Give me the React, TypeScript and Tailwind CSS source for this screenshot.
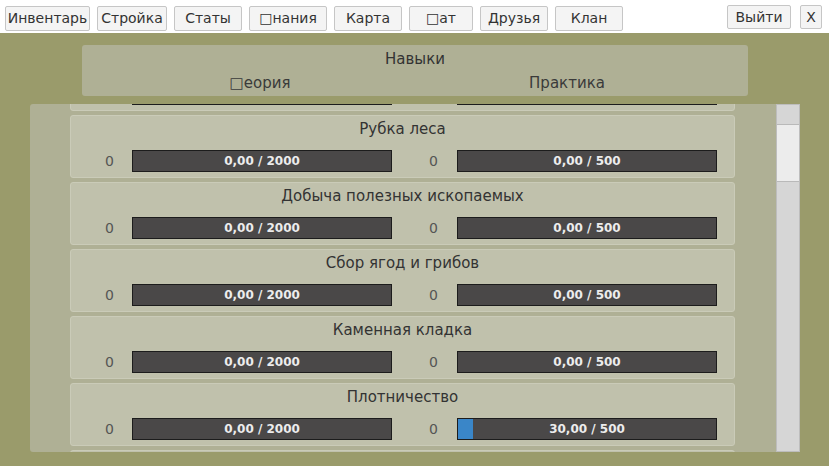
import React from "react";

type Skill = {
  name: string;
  theoryLvl: number;
  theory: number;
  theoryMax: number;
  practiceLvl: number;
  practice: number;
  practiceMax: number;
  partial?: boolean;
};

const skills: Skill[] = [
  { name: "", theoryLvl: 0, theory: 0, theoryMax: 2000, practiceLvl: 0, practice: 0, practiceMax: 500, partial: true },
  { name: "Рубка леса", theoryLvl: 0, theory: 0, theoryMax: 2000, practiceLvl: 0, practice: 0, practiceMax: 500 },
  { name: "Добыча полезных ископаемых", theoryLvl: 0, theory: 0, theoryMax: 2000, practiceLvl: 0, practice: 0, practiceMax: 500 },
  { name: "Сбор ягод и грибов", theoryLvl: 0, theory: 0, theoryMax: 2000, practiceLvl: 0, practice: 0, practiceMax: 500 },
  { name: "Каменная кладка", theoryLvl: 0, theory: 0, theoryMax: 2000, practiceLvl: 0, practice: 0, practiceMax: 500 },
  { name: "Плотничество", theoryLvl: 0, theory: 0, theoryMax: 2000, practiceLvl: 0, practice: 30, practiceMax: 500 },
  { name: "", theoryLvl: 0, theory: 0, theoryMax: 2000, practiceLvl: 0, practice: 0, practiceMax: 500, partial: true },
];

const navButtons = [
  { label: "Инвентарь", w: "w-[85px]" },
  { label: "Стройка", w: "w-[70px]" },
  { label: "Статы", w: "w-[68px]" },
  { label: "□нания", w: "w-[78px]" },
  { label: "Карта", w: "w-[68px]" },
  { label: "□ат", w: "w-[64px]" },
  { label: "Друзья", w: "w-[68px]" },
  { label: "Клан", w: "w-[68px]" },
];

function fmt(n: number) {
  return n.toFixed(2).replace(".", ",");
}

function Bar({ value, max, hideText }: { value: number; max: number; hideText?: boolean }) {
  const pct = Math.min(100, (value / max) * 100);
  return (
    <div className="relative w-[260px] h-[22px] bg-[#4a4848] border border-[#1c1c1c] overflow-hidden">
      <div className="absolute left-0 top-0 bottom-0 bg-[#3a86c8]" style={{ width: `${pct}%` }} />
      <div className="relative h-full flex items-center justify-center text-[12px] font-bold text-[#ececec]">
        {hideText ? "" : `${fmt(value)} / ${max}`}
      </div>
    </div>
  );
}

function SkillRow({ skill }: { skill: Skill }) {
  return (
    <div className="w-[665px] h-[63px] shrink-0 mb-[4px] rounded-[3px] bg-[#c0c1ac] border border-[#cacbb8] flex flex-col">
      <div className="h-[24px] pt-[2px] flex items-center justify-center text-[15px] text-[#333]">
        {skill.name}
      </div>
      <div className="mt-[10px] flex items-center pl-[32px]">
        <span className="w-[13px] text-center text-[14px] text-[#555]">{skill.partial ? "" : skill.theoryLvl}</span>
        <div className="ml-[16px]">
          <Bar value={skill.theory} max={skill.theoryMax} hideText={skill.partial} />
        </div>
        <span className="ml-[35px] w-[13px] text-center text-[14px] text-[#555]">{skill.partial ? "" : skill.practiceLvl}</span>
        <div className="ml-[17px]">
          <Bar value={skill.practice} max={skill.practiceMax} hideText={skill.partial} />
        </div>
      </div>
    </div>
  );
}

export default function App() {
  return (
    <div className="w-[829px] h-[466px] bg-[#9a9b6b] flex flex-col overflow-hidden font-['DejaVu_Sans',Verdana,sans-serif]">
      <div className="h-[33px] bg-white flex items-start shrink-0">
        <div className="flex gap-[7px] pl-[5px] pt-[6px]">
          {navButtons.map((b) => (
            <button
              key={b.label}
              className={`${b.w} h-[25px] bg-[#f4f4f4] border border-[#c6c6c6] rounded-[2px] text-[14px] text-[#333] flex items-center justify-center`}
            >
              {b.label}
            </button>
          ))}
        </div>
        <div className="ml-auto flex gap-[9px] pt-[5px] pr-[7px]">
          <button className="w-[64px] h-[24px] bg-[#f4f4f4] border border-[#c6c6c6] rounded-[2px] text-[14px] text-[#333] flex items-center justify-center">
            Выйти
          </button>
          <button className="w-[22px] h-[24px] bg-[#f4f4f4] border border-[#c6c6c6] rounded-[2px] text-[14px] text-[#333] flex items-center justify-center">
            X
          </button>
        </div>
      </div>

      <div className="ml-[82px] mt-[12px] w-[666px] h-[51px] rounded-[3px] bg-[#afb095] shrink-0 flex flex-col">
        <div className="h-[28px] flex items-center justify-center text-[15px] text-[#333]">Навыки</div>
        <div className="h-[20px] flex items-center text-[15px] text-[#3a3a3a]">
          <span className="w-[356px] text-center">□еория</span>
          <span className="w-[258px] text-center">Практика</span>
        </div>
      </div>

      <div className="ml-[30px] mt-[8px] w-[770px] h-[348px] flex shrink-0">
        <div className="w-[746px] h-full bg-[#afb095] rounded-l-[3px] overflow-hidden pl-[40px]">
          <div className="-mt-[56px] flex flex-col">
            {skills.map((s, i) => (
              <SkillRow key={i} skill={s} />
            ))}
          </div>
        </div>
        <div className="w-[24px] h-full bg-[#d6d6d6] border border-[#bdbdbd] flex flex-col">
          <div className="mt-[19px] h-[58px] bg-[#ececec] border-y border-[#b9b9b9]" />
        </div>
      </div>
    </div>
  );
}
